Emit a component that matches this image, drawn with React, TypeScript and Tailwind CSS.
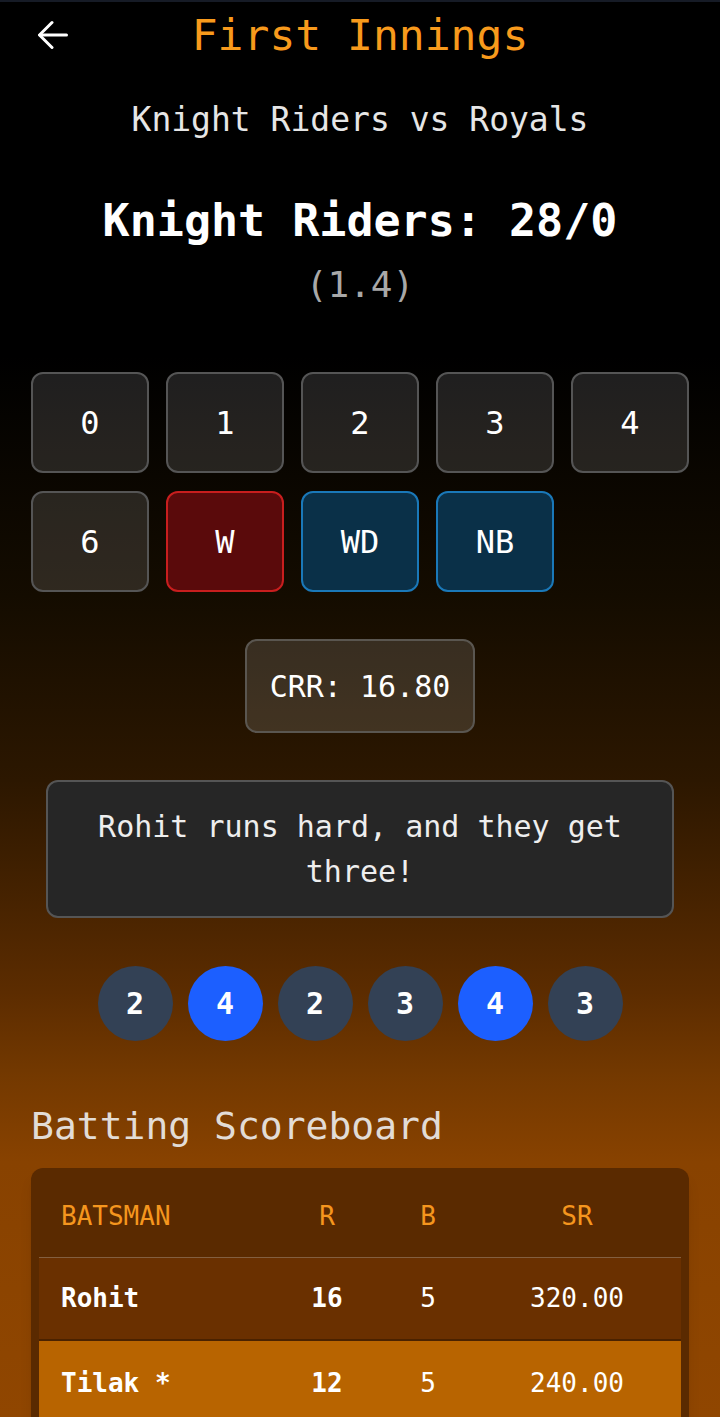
import { useState } from 'react'

const runs = ['0', '1', '2', '3', '4', '6']
const recent = [2, 4, 2, 3, 4, 3]

const batsmen = [
  { name: 'Rohit', r: 16, b: 5, sr: '320.00', onStrike: false },
  { name: 'Tilak *', r: 12, b: 5, sr: '240.00', onStrike: true },
]

export default function App() {
  const [score] = useState({ runs: 28, wickets: 0, overs: '1.4' })

  return (
    <div className="h-screen overflow-hidden border-t-2 border-[#161b26] bg-[linear-gradient(to_bottom,#000_0%,#000_25%,#140c00_42%,#2c1700_55%,#452200_63%,#5c2c00_70%,#743900_76%,#884200_82%,#904600_100%)] px-[31px] font-['DejaVu_Sans_Mono',monospace] text-white">
      {/* Header */}
      <header className="grid h-[66px] grid-cols-[1fr_auto_1fr] items-center">
        <button className="ml-[7px] flex h-[30px] w-[30px] items-center justify-center">
          <svg width="30" height="30" viewBox="0 0 30 30" fill="none" stroke="white" strokeWidth="3" strokeLinecap="round" strokeLinejoin="round">
            <path d="M28.5 15H2" />
            <path d="M14 2.5 1.5 15 14 27.5" />
          </svg>
        </button>
        <h1 className="text-[43px] leading-[52px] text-[#f89a1c]">First Innings</h1>
        <div />
      </header>

      {/* Match */}
      <p className="mt-[32px] text-center text-[33px] leading-[40px] text-[#e6e6e6]">Knight Riders vs Royals</p>
      <h2 className="mt-[54px] text-center text-[45px] font-bold leading-[54px]">
        Knight Riders: {score.runs}/{score.wickets}
      </h2>
      <p className="mt-[15px] text-center text-[36px] leading-[44px] text-[#a8a8a8]">({score.overs})</p>

      {/* Run buttons */}
      <div className="mt-[65px] grid grid-cols-5 gap-x-[17px] gap-y-[18px]">
        {runs.map((r) => (
          <button
            key={r}
            className="flex h-[101px] items-center justify-center rounded-xl border-2 border-[#555] bg-white/[0.12] text-[32px] text-white"
          >
            {r}
          </button>
        ))}
        <button className="flex h-[101px] items-center justify-center rounded-xl border-2 border-[#c81e1e] bg-[#5a0a0b] text-[32px] text-white">
          W
        </button>
        <button className="flex h-[101px] items-center justify-center rounded-xl border-2 border-[#1a78b8] bg-[#0a3048] text-[32px] text-white">
          WD
        </button>
        <button className="flex h-[101px] items-center justify-center rounded-xl border-2 border-[#1a78b8] bg-[#0a3048] text-[32px] text-white">
          NB
        </button>
      </div>

      {/* CRR */}
      <div className="mt-[47px] flex justify-center">
        <div className="flex h-[94px] items-center rounded-xl border-2 border-[#5a5650] bg-white/[0.13] px-[23px] text-[30px]">
          CRR: 16.80
        </div>
      </div>

      {/* Commentary */}
      <div className="mx-[15px] mt-[47px] flex h-[138px] items-center justify-center rounded-xl border-2 border-[#555] bg-[#262626] px-[40px] text-center text-[30px] leading-[45px] text-[#eeeeee]">
        Rohit runs hard, and they get three!
      </div>

      {/* Recent balls */}
      <div className="mt-[48px] flex justify-center gap-[15px]">
        {recent.map((b, i) => (
          <div
            key={i}
            className={
              b === 4
                ? 'flex h-[75px] w-[75px] items-center justify-center rounded-full bg-[#1c5fff] text-[30px] font-bold'
                : 'flex h-[75px] w-[75px] items-center justify-center rounded-full bg-[#334155] text-[30px] font-bold'
            }
          >
            {b}
          </div>
        ))}
      </div>

      {/* Scoreboard */}
      <h3 className="mt-[62px] text-[38px] leading-[46px] text-[#e2dcd6]">Batting Scoreboard</h3>
      <div className="mt-[19px] rounded-xl bg-[#5a2a00] p-[8px] shadow-lg">
        <div className="grid h-[82px] grid-cols-[250px_76px_126px_172px] items-center border-b border-white/25 text-[26px] text-[#f5961e]">
          <span className="pl-[22px]">BATSMAN</span>
          <span className="text-center">R</span>
          <span className="text-center">B</span>
          <span className="text-center">SR</span>
        </div>
        {batsmen.map((p) => (
          <div
            key={p.name}
            className={
              p.onStrike
                ? 'grid h-[84px] grid-cols-[250px_76px_126px_172px] items-center bg-[#b86400] text-[26px]'
                : 'grid h-[83px] grid-cols-[250px_76px_126px_172px] items-center border-b-2 border-[#4a2200] bg-[#6a3000] text-[26px]'
            }
          >
            <span className="pl-[22px] font-bold">{p.name}</span>
            <span className="text-center font-bold">{p.r}</span>
            <span className="text-center">{p.b}</span>
            <span className="text-center">{p.sr}</span>
          </div>
        ))}
      </div>
    </div>
  )
}
